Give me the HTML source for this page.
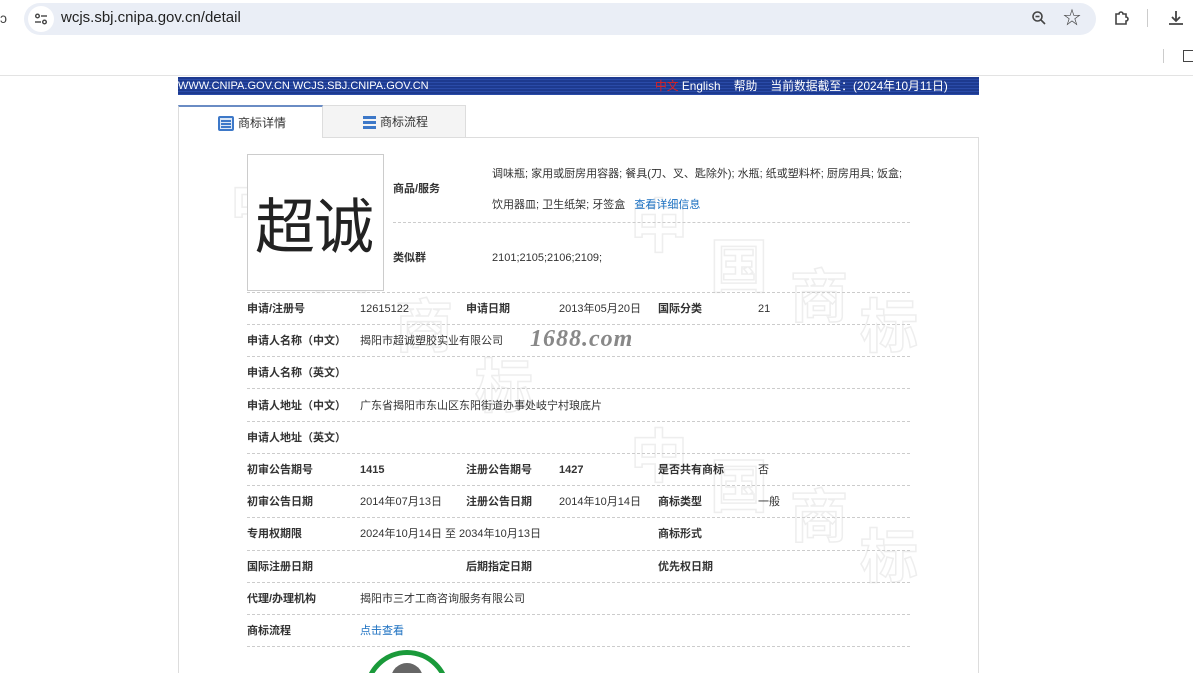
<!DOCTYPE html>
<html style="width:1193px;height:673px;overflow:hidden"><head><meta charset="utf-8"><style>
*{margin:0;padding:0;box-sizing:border-box}
body{width:1193px;height:673px;overflow:hidden;background:#fff;font-family:"Liberation Sans","Noto Sans CJK SC",sans-serif;position:relative;font-size:11px;line-height:16px;color:#333}
#w{position:absolute;left:0;top:0;width:1193px;height:673px;overflow:hidden}
.a{position:absolute;white-space:nowrap}
.lbl{font-weight:bold;color:#333}
.dl{position:absolute;left:247px;width:663px;border-top:1px dashed #ccc;height:0}
.wm{position:absolute;color:#fff;font-size:58px;line-height:64px;font-weight:bold;font-family:"Noto Sans CJK SC",sans-serif;-webkit-text-stroke:1.5px #eee}
</style></head><body><div id="w">
<div class="a" style="left:0;top:0;width:1193px;height:76px;background:#fff;border-bottom:1px solid #e3e3e3"></div>
<div class="a" style="left:0;top:10px;font-size:14px;color:#444">ↄ</div>
<div class="a" style="left:24px;top:3px;width:1072px;height:32px;border-radius:16px;background:#eaeef6"></div>
<div class="a" style="left:28px;top:6px;width:26px;height:26px;border-radius:13px;background:#fff"></div>
<svg class="a" style="left:34px;top:12px" width="14" height="14" viewBox="0 0 14 14" fill="none" stroke="#444" stroke-width="1.4"><circle cx="3.5" cy="4" r="1.8"/><line x1="7" y1="4" x2="13" y2="4"/><circle cx="10.5" cy="10" r="1.8"/><line x1="1" y1="10" x2="7" y2="10"/></svg>
<div class="a" style="left:61px;top:10px;font-size:15px;color:#222">wcjs.sbj.cnipa.gov.cn/detail</div>
<svg class="a" style="left:1031px;top:10px" width="16" height="16" viewBox="0 0 16 16" fill="none" stroke="#444" stroke-width="1.6"><circle cx="6.5" cy="6.5" r="4.5"/><line x1="10" y1="10" x2="14" y2="14"/><line x1="4.5" y1="6.5" x2="8.5" y2="6.5"/></svg>
<div class="a" style="left:1063px;top:6px;font-size:18px;line-height:24px;color:#444">☆</div>
<svg class="a" style="left:1113px;top:9px" width="18" height="18" viewBox="0 0 18 18" fill="none" stroke="#444" stroke-width="1.6"><path d="M3 5h3a2 2 0 1 1 4 0h3v3a2 2 0 1 1 0 4v3H3z"/></svg>
<div class="a" style="left:1147px;top:9px;width:1px;height:18px;background:#ccc"></div>
<svg class="a" style="left:1167px;top:9px" width="18" height="18" viewBox="0 0 18 18" fill="none" stroke="#444" stroke-width="1.8"><path d="M9 2v10M5 8l4 4 4-4M2 15h14"/></svg>
<div class="a" style="left:1163px;top:49px;width:1px;height:14px;background:#ccc"></div>
<div class="a" style="left:1183px;top:50px;width:10px;height:12px;border:1.5px solid #444;border-right:none"></div>

<div class="a" style="left:178px;top:77px;width:801px;height:18px;background:repeating-linear-gradient(#1d3a8f 0 2px,#2a4ba8 2px 3px)"></div>
<div class="a" style="left:178px;top:78px;color:#fff;font-size:11px">WWW.CNIPA.GOV.CN WCJS.SBJ.CNIPA.GOV.CN</div>
<div class="a" style="left:655px;top:78px;color:#fff;font-size:11.8px"><span style="color:#e02020">中文</span> English &nbsp;&nbsp; 帮助 &nbsp;&nbsp; 当前数据截至：(2024年10月11日)</div>

<div class="a" style="left:178px;top:105px;width:145px;height:33px;background:#fff;border-top:2px solid #6a8cc4;border-left:1px solid #ddd;border-right:1px solid #ddd;z-index:2"></div>
<div class="a" style="left:322px;top:105px;width:144px;height:32px;background:#f4f4f4;border:1px solid #ddd;border-bottom:none"></div>
<div class="a" style="left:218px;top:116px;width:16px;height:15px;border:2px solid #3d78c8;border-radius:2px;background:#dbe7f6;z-index:3"></div>
<div class="a" style="left:221px;top:120px;width:10px;height:1.5px;background:#3d78c8;box-shadow:0 3px #3d78c8,0 6px #3d78c8;z-index:3"></div>
<div class="a" style="left:238px;top:115px;font-size:12px;z-index:3">商标详情</div>
<div class="a" style="left:363px;top:116px;width:13px;height:13px;background:repeating-linear-gradient(#3d78c8 0 3px,transparent 3px 5px)"></div>
<div class="a" style="left:380px;top:114px;font-size:12px">商标流程</div>
<div class="a" style="left:178px;top:137px;width:801px;height:536px;border:1px solid #ddd;border-bottom:none"></div>

<div class="wm" style="left:230px;top:170px">中</div>
<div class="wm" style="left:312px;top:230px">国</div>
<div class="wm" style="left:395px;top:290px">商</div>
<div class="wm" style="left:475px;top:350px">标</div>
<div class="wm" style="left:630px;top:190px">中</div>
<div class="wm" style="left:710px;top:230px">国</div>
<div class="wm" style="left:790px;top:260px">商</div>
<div class="wm" style="left:860px;top:290px">标</div>
<div class="wm" style="left:630px;top:420px">中</div>
<div class="wm" style="left:710px;top:450px">国</div>
<div class="wm" style="left:790px;top:480px">商</div>
<div class="wm" style="left:860px;top:520px">标</div>

<div class="a" style="left:247px;top:154px;width:137px;height:137px;border:1px solid #ccc;background:#fff"></div>
<div class="a" style="left:255px;top:188px;font-size:60px;color:#222;font-family:'Noto Sans CJK SC',sans-serif;line-height:70px;letter-spacing:-1px">超诚</div>
<div class="a lbl" style="left:393px;top:181px">商品/服务</div>
<div class="a" style="left:492px;top:166px">调味瓶; 家用或厨房用容器; 餐具(刀、叉、匙除外); 水瓶; 纸或塑料杯; 厨房用具; 饭盒;</div>
<div class="a" style="left:492px;top:197px">饮用器皿; 卫生纸架; 牙签盒 &nbsp;&nbsp;<span style="color:#1a6fc0">查看详细信息</span></div>
<div class="a" style="left:393px;top:222px;width:517px;border-top:1px dashed #ccc"></div>
<div class="a lbl" style="left:393px;top:250px">类似群</div>
<div class="a" style="left:492px;top:250px">2101;2105;2106;2109;</div>
<div class="dl" style="top:292px"></div>

<div class="a lbl" style="left:247px;top:301px">申请/注册号</div><div class="a" style="left:360px;top:301px">12615122</div>
<div class="a lbl" style="left:466px;top:301px">申请日期</div><div class="a" style="left:559px;top:301px">2013年05月20日</div>
<div class="a lbl" style="left:658px;top:301px">国际分类</div><div class="a" style="left:758px;top:301px">21</div>
<div class="dl" style="top:324px"></div>
<div class="a lbl" style="left:247px;top:333px">申请人名称（中文）</div><div class="a" style="left:360px;top:333px">揭阳市超诚塑胶实业有限公司</div>
<div class="a" style="left:530px;top:324px;font-size:24px;line-height:30px;font-style:italic;font-weight:bold;color:#888;font-family:'Liberation Serif',serif;letter-spacing:1px">1688.com</div>
<div class="dl" style="top:356px"></div>
<div class="a lbl" style="left:247px;top:365px">申请人名称（英文）</div>
<div class="dl" style="top:388px"></div>
<div class="a lbl" style="left:247px;top:398px">申请人地址（中文）</div><div class="a" style="left:360px;top:398px">广东省揭阳市东山区东阳街道办事处岐宁村琅底片</div>
<div class="dl" style="top:421px"></div>
<div class="a lbl" style="left:247px;top:430px">申请人地址（英文）</div>
<div class="dl" style="top:453px"></div>
<div class="a lbl" style="left:247px;top:462px">初审公告期号</div><div class="a lbl" style="left:360px;top:462px">1415</div>
<div class="a lbl" style="left:466px;top:462px">注册公告期号</div><div class="a lbl" style="left:559px;top:462px">1427</div>
<div class="a lbl" style="left:658px;top:462px">是否共有商标</div><div class="a" style="left:758px;top:462px">否</div>
<div class="dl" style="top:485px"></div>
<div class="a lbl" style="left:247px;top:494px">初审公告日期</div><div class="a" style="left:360px;top:494px">2014年07月13日</div>
<div class="a lbl" style="left:466px;top:494px">注册公告日期</div><div class="a" style="left:559px;top:494px">2014年10月14日</div>
<div class="a lbl" style="left:658px;top:494px">商标类型</div><div class="a" style="left:758px;top:494px">一般</div>
<div class="dl" style="top:517px"></div>
<div class="a lbl" style="left:247px;top:526px">专用权期限</div><div class="a" style="left:360px;top:526px">2024年10月14日 至 2034年10月13日</div>
<div class="a lbl" style="left:658px;top:526px">商标形式</div>
<div class="dl" style="top:550px"></div>
<div class="a lbl" style="left:247px;top:559px">国际注册日期</div>
<div class="a lbl" style="left:466px;top:559px">后期指定日期</div>
<div class="a lbl" style="left:658px;top:559px">优先权日期</div>
<div class="dl" style="top:582px"></div>
<div class="a lbl" style="left:247px;top:591px">代理/办理机构</div><div class="a" style="left:360px;top:591px">揭阳市三才工商咨询服务有限公司</div>
<div class="dl" style="top:614px"></div>
<div class="a lbl" style="left:247px;top:623px">商标流程</div><div class="a" style="left:360px;top:623px;color:#1a6fc0">点击查看</div>
<div class="dl" style="top:646px"></div>
<div class="a" style="left:360px;top:648px;width:96px;height:25px;overflow:hidden">
<div class="a" style="left:4px;top:2px;width:86px;height:86px;border-radius:50%;border:5px solid #1a9a3a"></div>
<div class="a" style="left:31px;top:15px;width:32px;height:32px;border-radius:50%;background:#666"></div>
</div>
</div></body></html>
